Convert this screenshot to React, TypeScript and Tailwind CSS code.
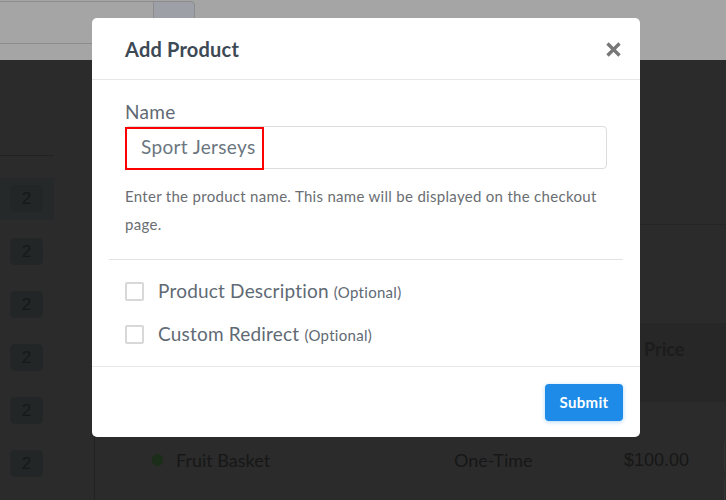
import React from "react";

const badgeRows = [0, 1, 2, 3, 4, 5];

function Sidebar() {
  return (
    <div className="w-[54px] shrink-0 flex flex-col">
      <div className="h-[96px] border-b border-[#222222]" />
      <div className="h-[16px]" />
      {badgeRows.map((i) => (
        <div key={i} className="h-[53px] flex items-center">
          <div className={`w-full h-[42px] flex items-center pl-[10px] ${i === 0 ? "bg-[#25292a]" : ""}`}>
            <div className="w-[33px] h-[27px] rounded-[5px] bg-[#222627] flex items-center justify-center text-[17px] text-[#161819] font-['Liberation_Sans',sans-serif]">
              2
            </div>
          </div>
        </div>
      ))}
    </div>
  );
}

function Main() {
  return (
    <div className="ml-[40px] flex-1 border-l border-[#222222] flex flex-col font-['Lato',sans-serif]">
      <div className="h-[165px] shrink-0 border-b border-[#252525]" />
      <div className="h-[98px] shrink-0" />
      <div className="h-[79px] shrink-0 bg-[#272727]">
        <div className="pl-[549px] pt-[15px] leading-[22px] text-[18px] font-bold text-[#1c1c1c]">Price</div>
      </div>
      <div className="h-[116px] shrink-0 flex items-center relative">
        <div className="pl-[57px] flex items-center">
          <div className="w-[11px] h-[12px] rounded-full bg-[#1b2e1a]" />
          <div className="ml-[13px] w-[278px] text-[18px] text-[#171717]">Fruit Basket</div>
          <div className="w-[170px] text-[18px] text-[#171717]">One-Time</div>
          <div className="text-[18px] text-[#171717] font-['Liberation_Sans',sans-serif]">$100.00</div>
        </div>
        <div className="absolute left-[629px] top-[38px] w-[20px] h-[32px] border border-[#353535] rounded-[3px]" />
        <div className="absolute left-[629px] top-[76px] w-[20px] h-[32px] border border-[#353535] rounded-[3px]" />
      </div>
    </div>
  );
}

function Modal() {
  return (
    <div className="absolute left-[92px] top-[18px] w-[548px] h-[419px] bg-white rounded-[5px] flex flex-col font-['Lato',sans-serif]">
      <div className="h-[62px] shrink-0 flex items-center justify-between pl-[33px] pr-[19px] border-b border-[#e6e6e6]">
        <div className="text-[20px] font-bold text-[#3d4955] tracking-[0.2px]">Add Product</div>
        <svg width="15" height="15" viewBox="0 0 15 15" className="mt-[2px]">
          <path d="M1.5 1.5 L13.5 13.5 M13.5 1.5 L1.5 13.5" stroke="#777777" strokeWidth="3.3" strokeLinecap="butt" />
        </svg>
      </div>
      <div className="flex-1 px-[33px] pt-[21px] flex flex-col">
        <div className="text-[19px] leading-[22px] tracking-[0.3px] text-[#5f6a74]">Name</div>
        <div className="relative mt-[3px] h-[43px] w-[482px] border border-[#dcdcdc] rounded-[4px] flex items-center pl-[15px]">
          <span className="text-[19px] tracking-[0.35px] text-[#6b7680]">Sport Jerseys</span>
          <div className="absolute left-[-1px] top-0 w-[139px] h-[43px] border-2 border-[#ff0000]" />
        </div>
        <div className="mt-[13px] text-[15px] leading-[28px] tracking-[0.3px] text-[#6a6e72] whitespace-nowrap">
          Enter the product name. This name will be displayed on the checkout
          <br />
          page.
        </div>
        <div className="mt-[21px] -mx-[16px] border-t border-[#e3e3e3]" />
        <div className="mt-[10px] flex flex-col">
          {["Product Description", "Custom Redirect"].map((t) => (
            <div key={t} className="h-[43px] flex items-center">
              <div className="w-[19px] h-[19px] border-2 border-[#d8d8d8] rounded-[2px]" />
              <div className="ml-[14px] text-[19px] tracking-[0.2px] text-[#5f6a74] whitespace-nowrap">
                {t} <span className="text-[15px] tracking-[0.3px]">(Optional)</span>
              </div>
            </div>
          ))}
        </div>
      </div>
      <div className="h-[71px] shrink-0 border-t border-[#e8e8e8] flex items-center justify-end pr-[17px]">
        <div className="w-[78px] h-[37px] rounded-[4px] bg-[#1e8be8] shadow-[0_1px_4px_rgba(30,139,232,0.35)] flex items-center justify-center text-white text-[15px] tracking-[0.3px] font-bold">
          Submit
        </div>
      </div>
    </div>
  );
}

export default function App() {
  return (
    <div className="relative w-[726px] h-[500px] overflow-hidden bg-[#2b2b2b]">
      <div className="h-[60px] bg-[#a5a5a5] flex items-start">
        <div className="mt-[1px] ml-[-4px] w-[159px] h-[43px] border border-[#8c8c8c] bg-[#a5a5a5]" />
        <div className="mt-[1px] ml-[-2px] w-[42px] h-[43px] border border-[#8c8c8c] rounded-r-[4px] bg-[#9da1a7]" />
      </div>
      <div className="flex h-[440px]">
        <Sidebar />
        <Main />
      </div>
      <Modal />
    </div>
  );
}
